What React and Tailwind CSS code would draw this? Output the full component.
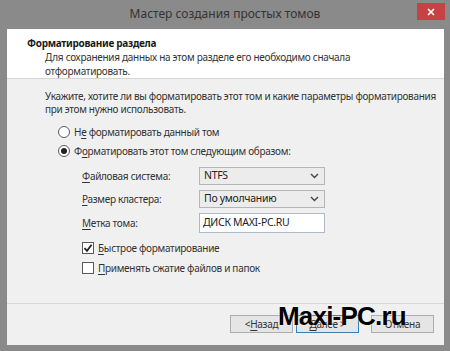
import React from "react";

const font = { fontFamily: '"Noto Sans", "Open Sans", sans-serif' };

function Radio({ checked }) {
  return (
    <span className="w-[12px] h-[12px] rounded-full border border-[#5a5a5a] bg-white flex items-center justify-center shrink-0">
      {checked && <span className="w-[6px] h-[6px] rounded-full bg-[#222]" />}
    </span>
  );
}

function Check({ checked }) {
  return (
    <span className="w-[12px] h-[12px] border border-[#5a5a5a] bg-white flex items-center justify-center shrink-0">
      {checked && (
        <svg width="10" height="10" viewBox="0 0 10 10">
          <path d="M1.5 5.2 L4 7.8 L8.6 1.8" fill="none" stroke="#222" strokeWidth="1.8" />
        </svg>
      )}
    </span>
  );
}

function Select({ value }) {
  return (
    <div className="w-[126px] h-[18px] border border-[#b5b5b5] bg-[#ececec] flex items-center pl-[4px] pr-[5px]">
      <span className="flex-1 text-[10.5px] text-[#222]">{value}</span>
      <svg width="9" height="6" viewBox="0 0 9 6">
        <path d="M1 1 L4.5 4.5 L8 1" fill="none" stroke="#444" strokeWidth="1.4" />
      </svg>
    </div>
  );
}

function U({ children }) {
  return <span className="underline underline-offset-2">{children}</span>;
}

export default function App() {
  return (
    <div
      className="w-[450px] h-[351px] bg-[#8a8a8a] flex flex-col overflow-hidden text-[#2b2b2b]"
      style={font}
    >
      <div className="h-[29px] grid grid-cols-[1fr_auto_1fr] items-center">
        <div />
        <div className="text-[12px] text-[#333] leading-none pb-[1px]">Мастер создания простых томов</div>
        <div className="flex justify-end self-start pt-[3px] pr-[5px]">
          <div className="w-[28px] h-[17px] bg-[#c74343] flex items-center justify-center">
            <svg width="8" height="8" viewBox="0 0 8 8">
              <path d="M1 1 L7 7 M7 1 L1 7" stroke="#fff" strokeWidth="1.6" />
            </svg>
          </div>
        </div>
      </div>
      <div className="flex-1 ml-[7px] mr-[6px] mb-[6px] flex flex-col tracking-[-0.3px]">
        <div className="h-[50px] bg-white border-b border-[#d5d5d5] pt-[7px] pl-[20px]">
          <div className="text-[10px] font-bold leading-[14px] text-[#1a1a1a]">Форматирование раздела</div>
          <div className="pl-[18px] text-[10px] leading-[14px] text-[#333]">
            Для сохранения данных на этом разделе его необходимо сначала
            <br />
            отформатировать.
          </div>
        </div>
        <div className="flex-1 bg-[#f0f0f0] pl-[38px] pt-[11px] text-[10px] text-[#333]">
          <div className="leading-[13px] whitespace-nowrap">
            Укажите, хотите ли вы форматировать этот том и какие параметры форматирования
            <br />
            при этом нужно использовать.
          </div>
          <div className="mt-[9px] pl-[13px] flex items-center gap-[4px] h-[14px]">
            <Radio />
            <span>
              Н<U>е</U> форматировать данный том
            </span>
          </div>
          <div className="mt-[5px] pl-[13px] flex items-center gap-[4px] h-[14px]">
            <Radio checked />
            <span>
              Ф<U>о</U>рматировать этот том следующим образом:
            </span>
          </div>
          <div className="mt-[9px] pl-[37px] grid grid-cols-[117px_auto] gap-y-[5px] items-center">
            <span>
              <U>Ф</U>айловая система:
            </span>
            <Select value="NTFS" />
            <span>
              <U>Р</U>азмер кластера:
            </span>
            <Select value="По умолчанию" />
            <span>
              <U>М</U>етка тома:
            </span>
            <div className="w-[126px] h-[20px] border border-[#aeb9c8] bg-white flex items-center pl-[3px] text-[10.5px] text-[#222]">
              ДИСК MAXI-PC.RU
            </div>
          </div>
          <div className="mt-[8px] pl-[37px] flex items-center gap-[4px] h-[14px]">
            <Check checked />
            <span>
              <U>Б</U>ыстрое форматирование
            </span>
          </div>
          <div className="mt-[6px] pl-[37px] flex items-center gap-[4px] h-[14px]">
            <Check />
            <span>
              <U>П</U>рименять сжатие файлов и папок
            </span>
          </div>
        </div>
        <div className="h-[2px] bg-[#f0f0f0] border-t border-[#d8d8d8]" />
        <div className="h-[40px] bg-[#f0f0f0] flex items-center justify-end pr-[10px] relative">
          <div className="flex items-center gap-[3px] text-[10px] text-[#333] -mt-[2px]">
            <div className="w-[63px] h-[18px] border border-[#adadad] bg-[#e5e5e5] flex items-center justify-center">
              &lt; <U>Н</U>азад
            </div>
            <div className="w-[63px] h-[18px] border border-[#3c7fb1] bg-[#e5e5e5] flex items-center justify-center">
              <U>Д</U>алее &gt;
            </div>
            <div className="w-[63px] h-[18px] ml-[9px] border border-[#adadad] bg-[#e5e5e5] flex items-center justify-center">
              Отмена
            </div>
          </div>
          <div
            className="absolute left-[271px] top-[-8px] text-[26px] font-bold text-black tracking-[-0.8px]"
            style={{ fontFamily: '"Liberation Sans", Arial, sans-serif', textShadow: "0 0 2px #fff" }}
          >
            Maxi-PC.ru
          </div>
        </div>
      </div>
    </div>
  );
}
